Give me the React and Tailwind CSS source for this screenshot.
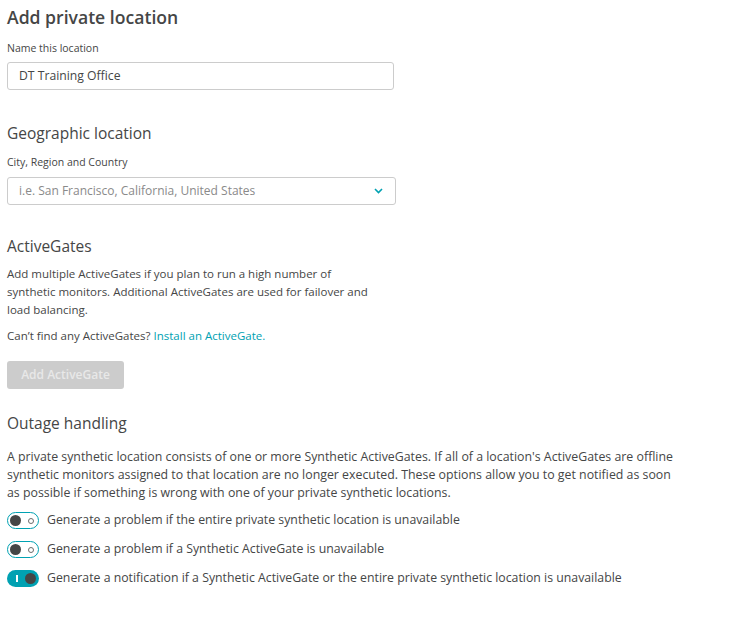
import React from "react";

function Toggle({ on }) {
  if (on) {
    return (
      <div className="relative flex h-[17px] w-[32px] shrink-0 items-center rounded-full bg-[#00a1b2]">
        <div className="ml-[9px] h-[7px] w-[2px] bg-white" />
        <div className="ml-auto mr-[3px] h-[11px] w-[11px] rounded-full bg-[#454646]" />
      </div>
    );
  }
  return (
    <div className="relative flex h-[17px] w-[32px] shrink-0 items-center rounded-full border-[1.5px] border-[#00a1b2] bg-white">
      <div className="ml-[2px] h-[11px] w-[11px] rounded-full bg-[#454646]" />
      <div className="ml-auto mr-[4px] h-[6px] w-[6px] rounded-full border border-[#6b6b6b]" />
    </div>
  );
}

export default function App() {
  const rows = [
    { on: false, text: "Generate a problem if the entire private synthetic location is unavailable" },
    { on: false, text: "Generate a problem if a Synthetic ActiveGate is unavailable" },
    { on: true, text: "Generate a notification if a Synthetic ActiveGate or the entire private synthetic location is unavailable" },
  ];
  return (
    <div className="min-h-[629px] bg-white px-[7px] font-['Open_Sans',sans-serif] text-[#454646]">
      <h1 className="pt-[5px] text-[17.6px] font-semibold leading-[24px]">Add private location</h1>
      <div className="mt-[12px] text-[10.5px] leading-[14px]">Name this location</div>
      <div className="mt-[7px] flex h-[28px] w-[387px] items-center rounded-[3px] border border-[#cccccc] px-[11px] text-[12.2px]">
        DT Training Office
      </div>

      <h2 className="mt-[32px] text-[15.5px] leading-[22px]">Geographic location</h2>
      <div className="mt-[11px] text-[10.5px] leading-[14px]">City, Region and Country</div>
      <div className="mt-[8px] flex h-[28px] w-[389px] items-center rounded-[3px] border border-[#cccccc] pl-[11px] pr-[12px] text-[12px] text-[#8a8a8a]">
        <span>i.e. San Francisco, California, United States</span>
        <svg className="ml-auto" width="9" height="6" viewBox="0 0 9 6" fill="none">
          <path d="M1 1l3.5 3.5L8 1" stroke="#00a1b2" strokeWidth="1.6" />
        </svg>
      </div>

      <h2 className="mt-[30px] text-[15.5px] leading-[22px]">ActiveGates</h2>
      <p className="mt-[8px] w-[370px] text-[11.5px] leading-[18px]">
        Add multiple ActiveGates if you plan to run a high number of synthetic monitors. Additional ActiveGates are used for failover and load balancing.
      </p>
      <p className="mt-[8px] text-[11.5px] leading-[18px]">
        Can’t find any ActiveGates? <span className="text-[#00a1b2]">Install an ActiveGate.</span>
      </p>
      <div className="mt-[16px] flex h-[28px] w-[117px] items-center justify-center rounded-[3px] bg-[#cccccc] text-[12px] font-semibold text-[#e8e8e8]">
        Add ActiveGate
      </div>

      <h2 className="mt-[23px] text-[15.5px] leading-[22px]">Outage handling</h2>
      <p className="mt-[14px] w-[675px] text-[12.35px] leading-[18px]">
        A private synthetic location consists of one or more Synthetic ActiveGates. If all of a location's ActiveGates are offline synthetic monitors assigned to that location are no longer executed. These options allow you to get notified as soon as possible if something is wrong with one of your private synthetic locations.
      </p>
      <div className="mt-[4px] flex flex-col">
        {rows.map((r, i) => (
          <div key={i} className="flex h-[29px] items-center gap-[8px] text-[12.3px]">
            <Toggle on={r.on} />
            <span>{r.text}</span>
          </div>
        ))}
      </div>
    </div>
  );
}
